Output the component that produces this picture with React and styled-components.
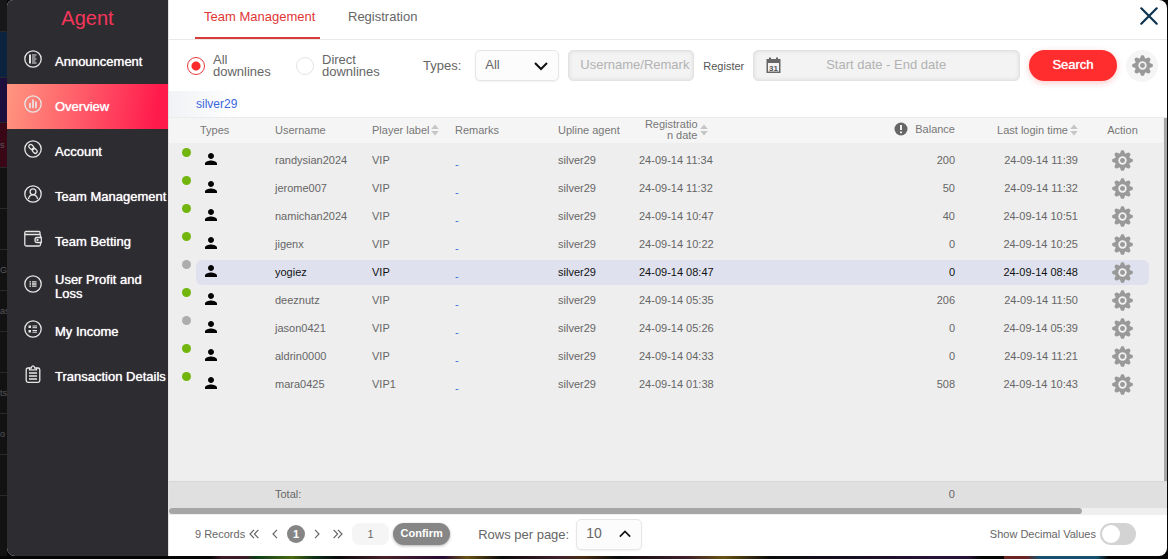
import React, { useState } from 'react';
import styled, { createGlobalStyle, css } from 'styled-components';
import { MdPerson } from 'react-icons/md';

const GlobalStyle = createGlobalStyle`
  *, *::before, *::after {
    box-sizing: border-box;
  }

  body {
    margin: 0;
    background: #050505;
    color: #666;
    font-family: "Liberation Sans", Arial, sans-serif;
    font-size: 13px;
  }

  button, input, select {
    font-family: inherit;
    color: inherit;
  }
`;

const Page = styled.div`
  display: grid;
  grid-template-columns: 7px minmax(0, 1fr);
  grid-template-rows: minmax(0, 1fr) 3px;
  height: 100vh;
  padding-right: 1px;
  overflow: hidden;
`;

const Behind = styled.div`
  background: #121213;
  color: #58585a;
  font-size: 9px;
  overflow: hidden;
`;

const BehindTile = styled.div`
  display: flex;
  align-items: center;
  height: ${({ $height }) => $height || 41}px;
  background: ${({ $color }) => $color || 'transparent'};
  border-bottom: 1px solid #29292b;
`;

const BehindBottom = styled.div`
  grid-column: 1 / -1;
  background: linear-gradient(
    90deg,
    #050505 18%, #3d1a26 19%, #3d1a26 21%, #0c3d18 22%, #4a6a12 25%, #0c3018 27%,
    #0a0a0a 29%, #4a2029 33%, #270b35 38%, #6a5215 40%, #0a0a0a 43%, #42202a 48%,
    #4a2c12 50%, #0a0a0a 53%, #42202a 59%, #6a5215 62%, #0a0a0a 66%, #251238 80%,
    #251238 83%, #050505 84%, #050505 86%, #6a2424 86%, #6a2424 88%, #17506e 89%,
    #17506e 94%, #050505 95%
  );
`;

const Dialog = styled.div`
  display: flex;
  min-width: 0;
  border-radius: 6px 8px 8px 8px;
  background: #fff;
  overflow: hidden;
`;

const Sidebar = styled.nav`
  flex: none;
  width: 161px;
  background: #2d2c30;
`;

const Brand = styled.h1`
  margin: 0;
  height: 39px;
  line-height: 36px;
  text-align: center;
  font-size: 20px;
  font-weight: 400;
  color: #f5365a;
`;

const NavItem = styled.a`
  display: flex;
  align-items: center;
  gap: 13px;
  height: 45px;
  padding-left: 17px;
  color: #fff;
  font-size: 13px;
  line-height: 14px;
  text-decoration: none;
  text-shadow: 0 0 1px #fff;
  background: ${({ $active }) => ($active ? 'linear-gradient(100deg, #ff9680 0%, #ff5566 50%, #ff1a4c 92%)' : 'none')};

  svg {
    flex: none;
    width: 18px;
    height: 18px;
    margin-bottom: 6px;
    color: #e6e6e6;
  }
`;

const Content = styled.main`
  flex: 1;
  min-width: 0;
  display: flex;
  flex-direction: column;
  border-left: 1px solid #e2e2e2;
`;

const TabBar = styled.header`
  display: flex;
  align-items: flex-start;
  gap: 19px;
  height: 40px;
  padding: 0 9px 0 26px;
  border-bottom: 1px solid #e9e9e9;
`;

const Tab = styled.button`
  height: 39px;
  width: 125px;
  padding: 0 0 4px 9px;
  border: 0;
  border-bottom: 2px solid ${({ $active }) => ($active ? '#d93a3a' : 'transparent')};
  background: none;
  color: ${({ $active }) => ($active ? '#e03636' : '#666')};
  font-size: 13px;
  text-align: left;
`;

const CloseButton = styled.button`
  margin: 7px 0 0 auto;
  padding: 0;
  border: 0;
  background: none;
  line-height: 0;
`;

const Filters = styled.form`
  display: flex;
  align-items: center;
  gap: 9px;
  height: 51px;
  padding: 0 9px 0 18px;
`;

const RadioGroup = styled.div`
  display: flex;
  gap: 26px;
  margin-right: 35px;
`;

const RadioLabel = styled.label`
  display: flex;
  align-items: center;
  gap: 8px;
  width: 83px;
  line-height: 12px;
`;

const Radio = styled.input`
  appearance: none;
  flex: none;
  width: 18px;
  height: 18px;
  margin: 0;
  border: 1px solid #e4e4e4;
  border-radius: 50%;

  &:checked {
    border-color: #e53a3a;
    background: radial-gradient(circle, #fb2c2c 4px, transparent 5px);
  }
`;

const FieldLabel = styled.label`
  font-size: ${({ $small }) => ($small ? 11 : 13)}px;
  color: ${({ $small }) => ($small ? '#555' : '#666')};
  white-space: nowrap;
`;

const SelectBox = styled.div`
  display: grid;
  align-items: center;
  width: ${({ $width }) => $width}px;
  height: 31px;
  margin-left: 5px;
  border: 1px solid #e6e6e6;
  border-radius: 5px;
  background: #fcfcfc;
  box-shadow: 0 1px 2px rgba(0, 0, 0, 0.06);

  select, svg {
    grid-area: 1 / 1;
  }

  select {
    appearance: none;
    width: 100%;
    height: 29px;
    padding: 0 9px 2px;
    border: 0;
    background: none;
    font-size: ${({ $fontSize }) => $fontSize || 13}px;
  }

  svg {
    justify-self: end;
    margin-right: 10px;
    pointer-events: none;
  }
`;

const inset = css`
  height: 31px;
  border: 1px solid #e2e2e2;
  border-radius: 5px;
  background: #f3f3f3;
  box-shadow: inset 0 0 4px rgba(0, 0, 0, 0.1);
`;

const TextInput = styled.input`
  ${inset}
  width: 126px;
  padding: 0 0 2px 11px;
  font-size: 13px;

  &::placeholder {
    color: #b2b2b2;
  }
`;

const DateField = styled.div`
  ${inset}
  flex: 1;
  display: flex;
  align-items: center;
  padding: 0 12px;

  input {
    flex: 1;
    min-width: 0;
    padding: 0 16px 2px 0;
    border: 0;
    background: none;
    font-size: 13px;
    text-align: center;
  }

  input::placeholder {
    color: #b2b2b2;
  }
`;

const SearchButton = styled.button`
  width: 88px;
  height: 31px;
  padding: 0 0 2px;
  border: 0;
  border-radius: 16px;
  background: #ff2d2d;
  box-shadow: 0 2px 6px rgba(255, 45, 45, 0.25);
  color: #fff;
  font-size: 13px;
  text-shadow: 0 0 1px #fff;
`;

const RoundButton = styled.button`
  display: grid;
  place-items: center;
  width: 32px;
  height: 32px;
  padding: 0;
  border: 0;
  border-radius: 50%;
  background: #f5f5f5;
`;

const Crumb = styled.div`
  height: 26px;
  padding-left: 27px;
  line-height: 26px;
  font-size: 12px;
  background: linear-gradient(90deg, #f0f2f5, #fff 70px);

  a {
    color: #3b66e0;
    text-decoration: none;
  }
`;

const ListArea = styled.section`
  flex: 1;
  min-height: 0;
  display: flex;
  background: #eee;
  border-top: 1px solid #ececec;
`;

const ListScroll = styled.div`
  flex: 1;
  min-width: 0;
`;

const VerticalThumb = styled.div`
  width: 3px;
  margin-left: 1px;
  background: #a6a6a6;
`;

const Table = styled.table`
  width: 100%;
  table-layout: fixed;
  border-collapse: separate;
  border-spacing: 0;
  font-size: 11px;
  line-height: 12px;

  th, td {
    padding: 0 4px 2px;
    font-weight: 400;
    text-align: left;
    white-space: nowrap;
  }
`;

const HeadRow = styled.tr`
  height: 25px;
  background: #f5f5f5;
  color: #777;
`;

const HeadCell = styled.th`
  && {
    text-align: ${({ $align }) => $align || 'left'};
  }
`;

const HeadLabel = styled.span`
  display: inline-flex;
  align-items: center;
  gap: 2px;
`;

const BrokenLabel = styled.span`
  width: 55px;
  line-height: 11px;
  text-align: right;
  white-space: normal;
  word-break: break-all;
`;

const BodyGap = styled.tr`
  height: ${({ $height }) => $height}px;

  && td {
    padding: 0;
  }
`;

const Row = styled.tr`
  height: 25px;
  color: ${({ $selected }) => ($selected ? '#111' : '#666')};

  td {
    background: ${({ $selected }) => ($selected ? '#dfe2ee' : 'transparent')};
  }

  td:first-child, td:last-child {
    background: none;
  }

  td:nth-child(2) {
    border-radius: 6px 0 0 6px;
  }

  td:nth-last-child(2) {
    border-radius: 0 6px 6px 0;
  }
`;

const Cell = styled.td`
  && {
    text-align: ${({ $align }) => $align || 'left'};
    vertical-align: ${({ $valign }) => $valign || 'middle'};
    color: ${({ $dark }) => ($dark ? '#111' : 'inherit')};
  }
`;

const DotCell = styled.td`
  && {
    padding: 0 0 0 13px;
    vertical-align: top;
  }
`;

const StatusDot = styled.span`
  display: block;
  width: 9px;
  height: 9px;
  border-radius: 50%;
  background: ${({ $online }) => ($online ? '#72b50c' : '#adadad')};
`;

const PersonCell = styled.td`
  && {
    padding: 0 6px 4px;
    line-height: 0;
    color: #050505;
  }
`;

const RemarkLink = styled.a`
  color: #3b66e0;
  line-height: 14px;
  text-decoration: none;
`;

const GearButton = styled.button`
  display: block;
  margin: 0 auto;
  padding: 0;
  border: 0;
  background: none;
  line-height: 0;
`;

const ActionCell = styled.td`
  && {
    padding: 0 0 0 14px;
  }
`;

const ActionHead = styled.th`
  && {
    padding: 0 0 2px 14px;
    text-align: center;
  }
`;

const TotalBar = styled.div`
  flex: none;
  padding-right: 4px;
  border-top: 1px solid #d6d6d6;
  background: #e0e0e0;

  tr {
    height: 26px;
  }
`;

const HorizontalTrack = styled.div`
  flex: none;
  height: 7px;
  background: #efefef;
`;

const HorizontalThumb = styled.div`
  width: 91.5%;
  height: 6px;
  border-radius: 3px;
  background: #a6a6a6;
`;

const Footer = styled.footer`
  flex: none;
  display: flex;
  align-items: center;
  height: 41px;
  padding: 0 31px 3px 26px;
`;

const Records = styled.span`
  font-size: 11px;
  margin-right: 4px;
`;

const Pager = styled.div`
  display: flex;
  align-items: center;
  gap: 9px;
  margin-right: 9px;
`;

const PageArrow = styled.button`
  display: flex;
  width: 10px;
  padding: 0;
  border: 0;
  background: none;
  justify-content: ${({ $end }) => ($end ? 'flex-end' : 'flex-start')};
`;

const CurrentPage = styled.button`
  width: 18px;
  height: 18px;
  padding: 0;
  border: 0;
  border-radius: 50%;
  background: #858585;
  color: #fff;
  font-size: 11px;
  font-weight: 700;
`;

const PageInput = styled.input`
  width: 37px;
  height: 22px;
  padding: 0;
  border: 0;
  border-radius: 8px;
  background: #f5f5f5;
  font-size: 11px;
  text-align: center;
`;

const ConfirmButton = styled.button`
  width: 57px;
  height: 22px;
  margin: 0 28px 0 4px;
  padding: 0 0 2px;
  border: 0;
  border-radius: 11px;
  background: #868686;
  box-shadow: 0 1px 3px rgba(0, 0, 0, 0.3);
  color: #fff;
  font-size: 11px;
  font-weight: 700;
`;

const RowsPerPage = styled.div`
  display: flex;
  align-items: center;
  gap: 2px;
`;

const DecimalLabel = styled.label`
  display: flex;
  align-items: center;
  gap: 4px;
  margin-left: auto;
  font-size: 11px;
`;

const Toggle = styled.input`
  appearance: none;
  display: flex;
  width: 36px;
  height: 22px;
  margin: 0;
  padding: 2px;
  border-radius: 11px;
  background: #d3d3d3;

  &::before {
    content: '';
    width: 18px;
    height: 18px;
    border-radius: 50%;
    background: #fff;
  }

  &:checked {
    justify-content: flex-end;
    background: #ff2d2d;
  }
`;

function Gear({ size }) {
  return (
    <svg width={size} height={size} viewBox="-12 -12 24 24" fill="#999">
      {[0, 45, 90, 135, 180, 225, 270, 315].map((a) => (
        <path key={a} d="M-3.400-7 L-1.800-11 Q-1.500-11.800-.8-11.800 H.8 Q1.500-11.800 1.800-11 L3.400-7Z" transform={`rotate(${a})`} />
      ))}
      <circle r="8.400" />
      <circle r="4.800" fill="#f1f1f1" />
      <circle r="2.800" />
    </svg>
  );
}

function Sorter() {
  return (
    <svg width="8" height="12" viewBox="0 0 8 12" fill="#c6c6c6">
      <path d="M4 .5 7.800 5H.2zM4 11.500 7.800 7H.2z" />
    </svg>
  );
}

function Chevron({ up }) {
  return (
    <svg width={up ? 12 : 14} height="10" viewBox="0 0 14 10" fill="none" stroke="#111" strokeWidth="2">
      <path d={up ? 'M1 8l6-6 6 6' : 'M1 2l6 6 6-6'} />
    </svg>
  );
}

function Arrow({ double, right }) {
  return (
    <svg width={double ? 10 : 6} height="10" viewBox={double ? '0 0 10 10' : '0 0 6 10'} fill="none" stroke="#666" strokeWidth="1.200">
      <g transform={right ? `translate(${double ? 10 : 6} 0) scale(-1 1)` : undefined}>
        <path d="M5 .8 1 5l4 4.200" />
        {double && <path d="M9.400.8 5.400 5l4 4.200" />}
      </g>
    </svg>
  );
}

function Calendar() {
  return (
    <svg width="15" height="17" viewBox="0 0 15 17">
      <path d="M1 2h2V.5h2V2h5V.5h2V2h2.500v14H.5V2z" fill="#666" />
      <path d="M2 6h11v8.500H2z" fill="#f3f3f3" />
      <text x="7.500" y="13.500" textAnchor="middle" fontSize="8" fontWeight="700" fill="#555">31</text>
    </svg>
  );
}

const icons = {
  announcement: (
    <>
      <circle cx="9" cy="9" r="8.200" />
      <path d="M6 4.500v9" strokeWidth="2" />
      <path d="M8 5h4.500M8 7h3.500M8 9h4.500M8 11h3.500M8 13h4.500" strokeWidth="1" />
    </>
  ),
  overview: (
    <>
      <circle cx="9" cy="9" r="8.200" />
      <path d="M6 8.500v4M9 5v7.500M12 7v5.500" strokeWidth="1.700" strokeLinecap="round" />
    </>
  ),
  account: (
    <>
      <circle cx="9" cy="9" r="8.200" />
      <rect x="4.500" y="5" width="5.500" height="3.800" rx="1.900" transform="rotate(45 7.200 7)" />
      <rect x="8" y="9" width="5.500" height="3.800" rx="1.900" transform="rotate(45 10.800 10.900)" />
      <path d="M8 8l2 2" />
    </>
  ),
  team: (
    <>
      <circle cx="9" cy="9" r="8.200" />
      <circle cx="9" cy="6.800" r="2.900" />
      <path d="M4.500 14c.3-2.500 1.800-4.100 4.500-4.100s4.200 1.600 4.500 4.100" />
    </>
  ),
  betting: (
    <>
      <path d="M16 4.500V2.500q0-1-1-1H2Q.8 1.500.8 3t1.200 1.500h13.500q1 0 1 1v2M.8 3v11.500q0 1.500 1.500 1.500h12.700q1.500 0 1.500-1.500v-2" />
      <path d="M17.300 7.500h-4.500q-1.800 0-1.800 2.500t1.800 2.500h4.500z" />
      <circle cx="13.500" cy="10" r=".5" />
    </>
  ),
  profit: (
    <>
      <circle cx="9" cy="9" r="8.200" />
      <path d="M5.500 6.800h1.500M5.500 9h1.500M5.500 11.200h1.500M8 6.800h4.500M8 9h4.500M8 11.200h4.500" strokeWidth="1.300" />
    </>
  ),
  income: (
    <>
      <circle cx="9" cy="9" r="8.200" />
      <path d="M4.500 6.800h2.500M4.500 11.300h2.500" strokeWidth="2.500" />
      <path d="M8.500 6h4.500M8.500 7.700h4.500M8.500 10.500h4.500M8.500 12.200h4.500" strokeWidth="1" />
    </>
  ),
  details: (
    <>
      <path d="M5.500 3H4q-1.800 0-1.800 1.800v10.700q0 1.800 1.800 1.800h10q1.800 0 1.800-1.800V4.800Q15.800 3 14 3h-1.500" />
      <path d="M5.500 4.800V3h1.800Q7.500.8 9 .8t1.700 2.200h1.800v1.800zM5 8h8M5 11h8M5 14h8" />
    </>
  ),
};

const menu = [
  { name: 'Announcement', icon: 'announcement' },
  { name: 'Overview', icon: 'overview' },
  { name: 'Account', icon: 'account' },
  { name: 'Team Management', icon: 'team' },
  { name: 'Team Betting', icon: 'betting' },
  { name: 'User Profit and Loss', icon: 'profit' },
  { name: 'My Income', icon: 'income' },
  { name: 'Transaction Details', icon: 'details' },
];

const tiles = [
  { height: 32, color: '#17171a' },
  { height: 46, color: '#0c2340' },
  { height: 45, color: '#1d0f3d' },
  { height: 45, color: '#3a0717', text: 's' },
  {}, {},
  { text: 'G' },
  { text: 'as' },
  {},
  { text: 'ts' },
  { text: 'o' },
  {},
];

const players = [
  { username: 'randysian2024', label: 'VIP', date: '24-09-14 11:34', balance: 200, login: '24-09-14 11:39', online: true },
  { username: 'jerome007', label: 'VIP', date: '24-09-14 11:32', balance: 50, login: '24-09-14 11:32', online: true },
  { username: 'namichan2024', label: 'VIP', date: '24-09-14 10:47', balance: 40, login: '24-09-14 10:51', online: true },
  { username: 'jigenx', label: 'VIP', date: '24-09-14 10:22', balance: 0, login: '24-09-14 10:25', online: true },
  { username: 'yogiez', label: 'VIP', date: '24-09-14 08:47', balance: 0, login: '24-09-14 08:48', online: false },
  { username: 'deeznutz', label: 'VIP', date: '24-09-14 05:35', balance: 206, login: '24-09-14 11:50', online: true },
  { username: 'jason0421', label: 'VIP', date: '24-09-14 05:26', balance: 0, login: '24-09-14 05:39', online: false },
  { username: 'aldrin0000', label: 'VIP', date: '24-09-14 04:33', balance: 0, login: '24-09-14 11:21', online: true },
  { username: 'mara0425', label: 'VIP1', date: '24-09-14 01:38', balance: 508, login: '24-09-14 10:43', online: true },
];

const columnWidths = [27, 75, 97, 83, 103, 81, 80, null, 123, 67, 14];

function Columns() {
  return (
    <colgroup>
      {columnWidths.map((width, i) => (
        <col key={i} width={width || undefined} />
      ))}
    </colgroup>
  );
}

function PlayersTable({ selected, onSelect }) {
  return (
    <Table>
      <Columns />
      <thead>
        <HeadRow>
          <td />
          <HeadCell>Types</HeadCell>
          <HeadCell>Username</HeadCell>
          <HeadCell><HeadLabel>Player label<Sorter /></HeadLabel></HeadCell>
          <HeadCell>Remarks</HeadCell>
          <HeadCell>Upline agent</HeadCell>
          <HeadCell $align="center">
            <HeadLabel><BrokenLabel>Registration date</BrokenLabel><Sorter /></HeadLabel>
          </HeadCell>
          <HeadCell $align="right">
            <HeadLabel>
              <svg width="19" height="14" viewBox="0 0 19 14">
                <circle cx="7" cy="7" r="6.500" fill="#666" />
                <path d="M7 3v5M7 9.500v1.700" stroke="#fff" strokeWidth="1.800" />
              </svg>
              Balance
            </HeadLabel>
          </HeadCell>
          <HeadCell $align="right"><HeadLabel>Last login time<Sorter /></HeadLabel></HeadCell>
          <ActionHead>Action</ActionHead>
          <td />
        </HeadRow>
      </thead>
      <tbody>
        <BodyGap $height={5}><td colSpan={11} /></BodyGap>
        {players.map((p) => (
          <React.Fragment key={p.username}>
            <Row $selected={selected === p.username} onClick={() => onSelect(p.username)}>
              <DotCell><StatusDot $online={p.online} /></DotCell>
              <PersonCell><MdPerson size={18} /></PersonCell>
              <Cell>{p.username}</Cell>
              <Cell $dark={selected === p.username}>{p.label}</Cell>
              <Cell $valign="bottom"><RemarkLink href="#remarks">-</RemarkLink></Cell>
              <Cell>silver29</Cell>
              <Cell>{p.date}</Cell>
              <Cell $align="right">{p.balance}</Cell>
              <Cell $align="right">{p.login}</Cell>
              <ActionCell>
                <GearButton type="button" aria-label={`Settings for ${p.username}`}><Gear size={21} /></GearButton>
              </ActionCell>
              <td />
            </Row>
            <BodyGap $height={3}><td colSpan={11} /></BodyGap>
          </React.Fragment>
        ))}
      </tbody>
    </Table>
  );
}

function App() {
  const [tab, setTab] = useState('Team Management');
  const [downlines, setDownlines] = useState('all');
  const [selected, setSelected] = useState('yogiez');

  return (
    <Page>
      <GlobalStyle />
      <Behind aria-hidden="true">
        {tiles.map((tile, i) => (
          <BehindTile key={i} $height={tile.height} $color={tile.color}>{tile.text}</BehindTile>
        ))}
      </Behind>

      <Dialog>
        <Sidebar>
          <Brand>Agent</Brand>
          {menu.map((item) => (
            <NavItem key={item.name} href={`#${item.icon}`} $active={item.icon === 'overview'}>
              <svg viewBox="0 0 18 18" fill="none" stroke="currentColor" strokeWidth="1.300">{icons[item.icon]}</svg>
              {item.name}
            </NavItem>
          ))}
        </Sidebar>

        <Content>
          <TabBar>
            {['Team Management', 'Registration'].map((name) => (
              <Tab key={name} type="button" $active={tab === name} onClick={() => setTab(name)}>{name}</Tab>
            ))}
            <CloseButton type="button" aria-label="Close">
              <svg width="18" height="18" viewBox="0 0 18 18" stroke="#0d3350" strokeWidth="2.200" strokeLinecap="round">
                <path d="M1.300 1.300l15.400 15.400M16.700 1.300L1.300 16.700" />
              </svg>
            </CloseButton>
          </TabBar>

          <Filters onSubmit={(e) => e.preventDefault()}>
            <RadioGroup>
              <RadioLabel>
                <Radio type="radio" name="downlines" checked={downlines === 'all'} onChange={() => setDownlines('all')} />
                All downlines
              </RadioLabel>
              <RadioLabel>
                <Radio type="radio" name="downlines" checked={downlines === 'direct'} onChange={() => setDownlines('direct')} />
                Direct downlines
              </RadioLabel>
            </RadioGroup>
            <FieldLabel htmlFor="types">Types:</FieldLabel>
            <SelectBox $width={84}>
              <select id="types"><option>All</option></select>
              <Chevron />
            </SelectBox>
            <TextInput aria-label="Username or remark" placeholder="Username/Remark" />
            <FieldLabel htmlFor="register" $small>Register</FieldLabel>
            <DateField>
              <Calendar />
              <input id="register" placeholder="Start date - End date" />
            </DateField>
            <SearchButton type="submit">Search</SearchButton>
            <RoundButton type="button" aria-label="Settings"><Gear size={21} /></RoundButton>
          </Filters>

          <Crumb><a href="#silver29">silver29</a></Crumb>

          <ListArea>
            <ListScroll>
              <PlayersTable selected={selected} onSelect={setSelected} />
            </ListScroll>
            <VerticalThumb />
          </ListArea>
          <TotalBar>
            <Table>
              <Columns />
              <tbody>
                <tr>
                  <td colSpan={2} />
                  <Cell colSpan={5}>Total:</Cell>
                  <Cell $align="right">0</Cell>
                  <td colSpan={3} />
                </tr>
              </tbody>
            </Table>
          </TotalBar>
          <HorizontalTrack><HorizontalThumb /></HorizontalTrack>

          <Footer>
            <Records>9 Records</Records>
            <Pager>
              <PageArrow type="button" aria-label="First page"><Arrow double /></PageArrow>
              <PageArrow type="button" aria-label="Previous page" $end><Arrow /></PageArrow>
              <CurrentPage type="button">1</CurrentPage>
              <PageArrow type="button" aria-label="Next page"><Arrow right /></PageArrow>
              <PageArrow type="button" aria-label="Last page"><Arrow double right /></PageArrow>
            </Pager>
            <PageInput aria-label="Page" defaultValue="1" />
            <ConfirmButton type="button">Confirm</ConfirmButton>
            <RowsPerPage>
              <FieldLabel htmlFor="rows">Rows per page:</FieldLabel>
              <SelectBox $width={66} $fontSize={14}>
                <select id="rows"><option>10</option></select>
                <Chevron up />
              </SelectBox>
            </RowsPerPage>
            <DecimalLabel>
              Show Decimal Values
              <Toggle type="checkbox" role="switch" />
            </DecimalLabel>
          </Footer>
        </Content>
      </Dialog>
      <BehindBottom />
    </Page>
  );
}

export default App;
